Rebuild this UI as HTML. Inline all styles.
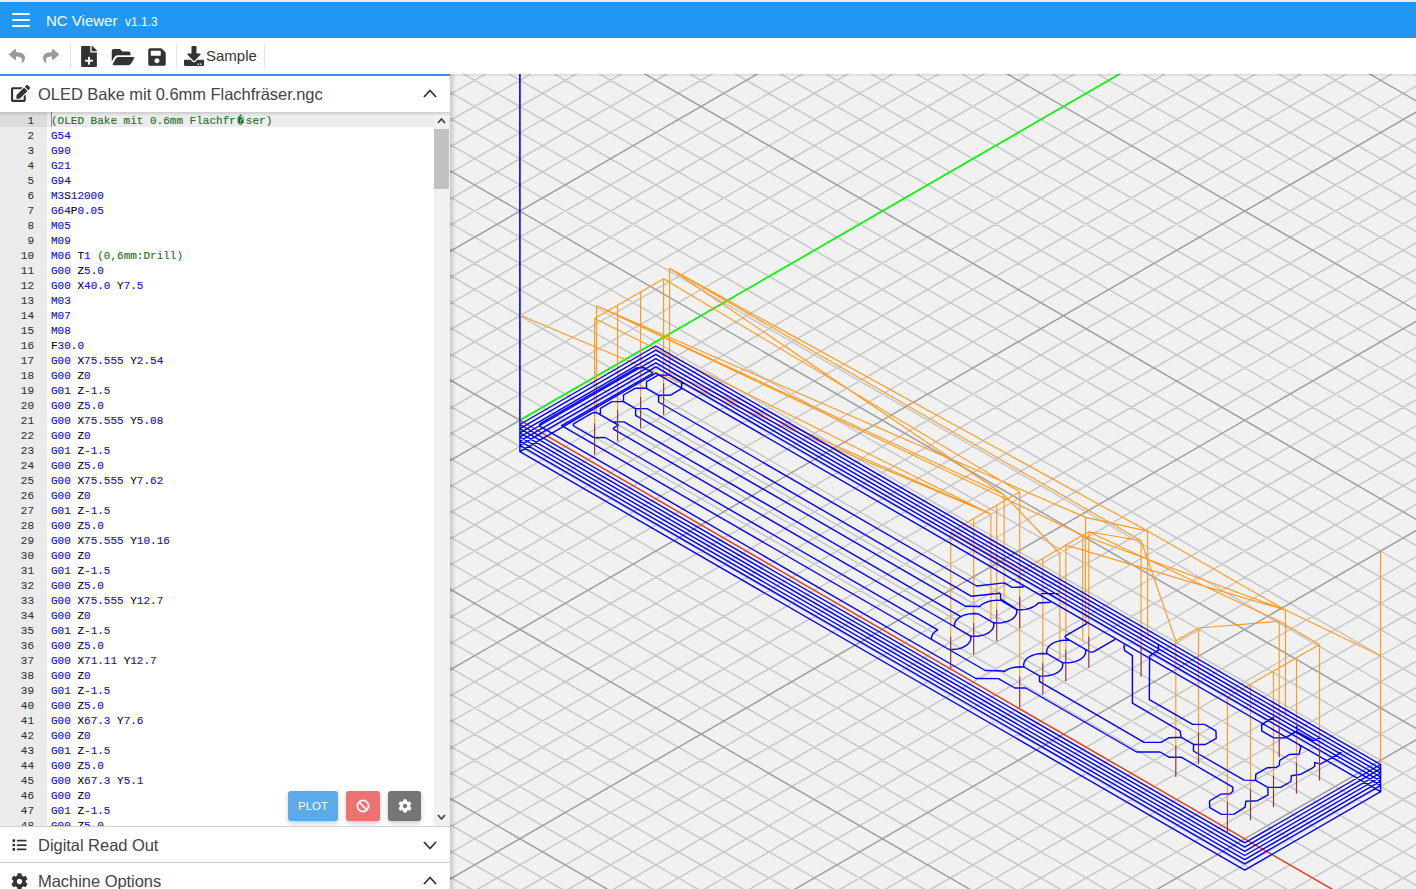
<!DOCTYPE html><html><head><meta charset="utf-8"><title>NC Viewer</title><style>
*{box-sizing:border-box;margin:0;padding:0}
html,body{width:1416px;height:889px;overflow:hidden;background:#fff;font-family:"Liberation Sans",sans-serif;}
#top{position:absolute;left:0;top:0;width:1416px;height:2px;background:#ece9e4}
#hdr{position:absolute;left:0;top:2px;width:1416px;height:36px;background:#2196f3;color:#fff}
#hdr .burger{position:absolute;left:12px;top:11px;width:18px;height:14px}
#hdr .burger i{position:absolute;left:0;width:18px;height:2px;background:#fff;border-radius:1px}
#hdr .title{position:absolute;left:46px;top:9.5px;font-size:15px;line-height:18px;white-space:nowrap}
#hdr .ver{position:absolute;left:125px;top:10.5px;font-size:12px;line-height:18px;white-space:nowrap}
#tb{position:absolute;left:0;top:38px;width:1416px;height:36px;background:#fff}
#tb .sep{position:absolute;top:6px;width:1px;height:25px;background:#e4e4e4}
#tb svg{position:absolute}
#tb .sample{position:absolute;left:206px;top:9px;font-size:15px;line-height:18px;color:#333}
#side{position:absolute;left:0;top:74px;width:450px;height:815px;background:#fff;border-top:2px solid #3f8fda}
.acc{position:absolute;left:0;width:450px;height:36px;background:#fff;color:#444}
.acc .lbl{position:absolute;left:38px;top:8px;font-size:16.5px;letter-spacing:-0.04px;line-height:20px;white-space:nowrap;color:#444}
.acc svg{position:absolute}
#ed{position:absolute;left:0;top:35.5px;width:450px;height:714.5px;background:#fff;overflow:hidden;font-family:"Liberation Mono",monospace;font-size:11px;line-height:15px}
#ed .gut{position:absolute;left:0;top:0;width:47px;height:100%;background:#ebebeb;color:#333;text-align:right;-webkit-text-stroke:0.1px}
#ed .gl{height:15px;padding-right:13px;padding-top:2px}
#ed .gl.act{background:#dcdcdc}
#ed .txt{position:absolute;left:47px;top:0;width:387px;height:100%}
#ed .tl{height:15px;padding-left:4px;white-space:pre;padding-top:2px;-webkit-text-stroke:0.12px}
#ed .rc{display:inline-block;width:10px;text-align:center}
#ed .tl.act{background:#ececec}
#ed .k{color:#1010c4}#ed .n{color:#1010c4}#ed .l{color:#000}#ed .c{color:#236e24}
#ed .cursor{position:absolute;left:51px;top:0;width:1px;height:15px;background:#888}
#ed .sb{position:absolute;left:434px;top:0;width:16px;height:100%;background:#f1f1f1}
#ed .sb .th{position:absolute;left:0;top:17px;width:15px;height:60px;background:#c1c1c1}
#ed .shadow{position:absolute;left:0;top:0;width:450px;height:4px;background:linear-gradient(rgba(0,0,0,.14),rgba(0,0,0,0))}
.btn{font-family:"Liberation Sans",sans-serif;position:absolute;top:679px;height:30px;border-radius:3px;box-shadow:0 2px 5px rgba(0,0,0,.22);color:#fff;font-size:11.5px;text-align:center;line-height:30px}
#cv{position:absolute;left:450px;top:74px;width:966px;height:815px;background:#f1f1f1;overflow:hidden}
#cv svg{position:absolute;left:0;top:0}
#cvsh{position:absolute;left:450px;top:74px;width:6px;height:815px;background:linear-gradient(90deg,rgba(0,0,0,.17),rgba(0,0,0,0))}
#cvtop{position:absolute;left:450px;top:74px;width:966px;height:3px;background:linear-gradient(rgba(0,0,0,.10),rgba(0,0,0,0))}
</style></head><body><div id="cv"><svg width="966" height="815" viewBox="0 0 966 815"><path d="M-4913.1 -961.4L2334.9 3223.2M-4913.1 1654L2334.9 -2530.6M-4890.5 -974.5L2357.6 3210.2M-4890.5 1667.1L2357.6 -2517.6M-4867.8 -987.6L2380.2 3197.1M-4867.8 1680.2L2380.2 -2504.5M-4845.2 -1000.6L2402.9 3184M-4845.2 1693.2L2402.9 -2491.4M-4799.9 -1026.8L2448.2 3157.9M-4799.9 1719.4L2448.2 -2465.3M-4777.2 -1039.9L2470.8 3144.8M-4777.2 1732.5L2470.8 -2452.2M-4754.6 -1052.9L2493.5 3131.7M-4754.6 1745.5L2493.5 -2439.1M-4731.9 -1066L2516.1 3118.6M-4731.9 1758.6L2516.1 -2426M-4709.3 -1079.1L2538.8 3105.5M-4709.3 1771.7L2538.8 -2412.9M-4686.6 -1092.2L2561.4 3092.5M-4686.6 1784.8L2561.4 -2399.9M-4664 -1105.2L2584.1 3079.4M-4664 1797.8L2584.1 -2386.8M-4618.7 -1131.4L2629.4 3053.2M-4618.7 1824L2629.4 -2360.6M-4596 -1144.5L2652 3040.2M-4596 1837.1L2652 -2347.6M-4573.4 -1157.6L2674.7 3027.1M-4573.4 1850.2L2674.7 -2334.5M-4550.7 -1170.6L2697.3 3014M-4550.7 1863.2L2697.3 -2321.4M-4528 -1183.7L2720 3000.9M-4528 1876.3L2720 -2308.3M-4505.4 -1196.8L2742.6 2987.9M-4505.4 1889.4L2742.6 -2295.3M-4482.8 -1209.9L2765.3 2974.8M-4482.8 1902.5L2765.3 -2282.2M-4437.5 -1236L2810.6 2948.6M-4437.5 1928.6L2810.6 -2256M-4414.8 -1249.1L2833.2 2935.5M-4414.8 1941.7L2833.2 -2242.9M-4392.1 -1262.2L2855.9 2922.5M-4392.1 1954.8L2855.9 -2229.9M-4369.5 -1275.2L2878.5 2909.4M-4369.5 1967.8L2878.5 -2216.8M-4346.9 -1288.3L2901.2 2896.3M-4346.9 1980.9L2901.2 -2203.7M-4324.2 -1301.4L2923.8 2883.2M-4324.2 1994L2923.8 -2190.6M-4301.5 -1314.5L2946.5 2870.2M-4301.5 2007.1L2946.5 -2177.6M-4256.2 -1340.6L2991.8 2844M-4256.2 2033.2L2991.8 -2151.4M-4233.6 -1353.7L3014.4 2830.9M-4233.6 2046.3L3014.4 -2138.3M-4211 -1366.8L3037.1 2817.8M-4211 2059.4L3037.1 -2125.2M-4188.3 -1379.9L3059.7 2804.8M-4188.3 2072.5L3059.7 -2112.2M-4165.6 -1392.9L3082.4 2791.7M-4165.6 2085.5L3082.4 -2099.1M-4143 -1406L3105 2778.6M-4143 2098.6L3105 -2086M-4120.4 -1419.1L3127.7 2765.5M-4120.4 2111.7L3127.7 -2072.9M-4075 -1445.2L3173 2739.4M-4075 2137.8L3173 -2046.8M-4052.4 -1458.3L3195.6 2726.3M-4052.4 2150.9L3195.6 -2033.7M-4029.8 -1471.4L3218.3 2713.2M-4029.8 2164L3218.3 -2020.6M-4007.1 -1484.5L3240.9 2700.2M-4007.1 2177.1L3240.9 -2007.6M-3984.5 -1497.6L3263.6 2687.1M-3984.5 2190.2L3263.6 -1994.5M-3961.8 -1510.6L3286.2 2674M-3961.8 2203.2L3286.2 -1981.4M-3939.2 -1523.7L3308.9 2660.9M-3939.2 2216.3L3308.9 -1968.3M-3893.8 -1549.9L3354.2 2634.8M-3893.8 2242.5L3354.2 -1942.2M-3871.2 -1562.9L3376.8 2621.7M-3871.2 2255.5L3376.8 -1929.1M-3848.6 -1576L3399.5 2608.6M-3848.6 2268.6L3399.5 -1916M-3825.9 -1589.1L3422.1 2595.5M-3825.9 2281.7L3422.1 -1902.9M-3803.2 -1602.2L3444.8 2582.5M-3803.2 2294.8L3444.8 -1889.9M-3780.6 -1615.2L3467.4 2569.4M-3780.6 2307.8L3467.4 -1876.8M-3758 -1628.3L3490.1 2556.3M-3758 2320.9L3490.1 -1863.7M-3712.7 -1654.5L3535.4 2530.2M-3712.7 2347.1L3535.4 -1837.6M-3690 -1667.6L3558 2517.1M-3690 2360.2L3558 -1824.5M-3667.3 -1680.6L3580.7 2504M-3667.3 2373.2L3580.7 -1811.4M-3644.7 -1693.7L3603.3 2490.9M-3644.7 2386.3L3603.3 -1798.3M-3622.1 -1706.8L3626 2477.8M-3622.1 2399.4L3626 -1785.2M-3599.4 -1719.9L3648.6 2464.8M-3599.4 2412.5L3648.6 -1772.2M-3576.8 -1732.9L3671.2 2451.7M-3576.8 2425.5L3671.2 -1759.1M-3531.5 -1759.1L3716.6 2425.5M-3531.5 2451.7L3716.6 -1732.9M-3508.8 -1772.2L3739.2 2412.5M-3508.8 2464.8L3739.2 -1719.9M-3486.2 -1785.2L3761.9 2399.4M-3486.2 2477.8L3761.9 -1706.8M-3463.5 -1798.3L3784.5 2386.3M-3463.5 2490.9L3784.5 -1693.7M-3440.8 -1811.4L3807.1 2373.2M-3440.8 2504L3807.1 -1680.6M-3418.2 -1824.5L3829.8 2360.2M-3418.2 2517.1L3829.8 -1667.6M-3395.6 -1837.6L3852.4 2347.1M-3395.6 2530.2L3852.4 -1654.5M-3350.2 -1863.7L3897.8 2320.9M-3350.2 2556.3L3897.8 -1628.3M-3327.6 -1876.8L3920.4 2307.8M-3327.6 2569.4L3920.4 -1615.2M-3305 -1889.9L3943.1 2294.8M-3305 2582.5L3943.1 -1602.2M-3282.3 -1902.9L3965.7 2281.7M-3282.3 2595.5L3965.7 -1589.1M-3259.7 -1916L3988.4 2268.6M-3259.7 2608.6L3988.4 -1576M-3237 -1929.1L4011 2255.5M-3237 2621.7L4011 -1562.9M-3214.3 -1942.2L4033.6 2242.5M-3214.3 2634.8L4033.6 -1549.9M-3169.1 -1968.3L4078.9 2216.3M-3169.1 2660.9L4078.9 -1523.7M-3146.4 -1981.4L4101.6 2203.2M-3146.4 2674L4101.6 -1510.6M-3123.8 -1994.5L4124.2 2190.2M-3123.8 2687.1L4124.2 -1497.6M-3101.1 -2007.6L4146.9 2177.1M-3101.1 2700.2L4146.9 -1484.5M-3078.5 -2020.6L4169.6 2164M-3078.5 2713.2L4169.6 -1471.4M-3055.8 -2033.7L4192.2 2150.9M-3055.8 2726.3L4192.2 -1458.3M-3033.2 -2046.8L4214.8 2137.8M-3033.2 2739.4L4214.8 -1445.2M-2987.8 -2072.9L4260.1 2111.7M-2987.8 2765.5L4260.1 -1419.1M-2965.2 -2086L4282.8 2098.6M-2965.2 2778.6L4282.8 -1406M-2942.6 -2099.1L4305.4 2085.5M-2942.6 2791.7L4305.4 -1392.9M-2919.9 -2112.2L4328.1 2072.5M-2919.9 2804.8L4328.1 -1379.9M-2897.2 -2125.2L4350.8 2059.4M-2897.2 2817.8L4350.8 -1366.8M-2874.6 -2138.3L4373.4 2046.3M-2874.6 2830.9L4373.4 -1353.7M-2852 -2151.4L4396.1 2033.2M-2852 2844L4396.1 -1340.6M-2806.7 -2177.6L4441.3 2007.1M-2806.7 2870.2L4441.3 -1314.5M-2784 -2190.6L4464 1994M-2784 2883.2L4464 -1301.4M-2761.3 -2203.7L4486.6 1980.9M-2761.3 2896.3L4486.6 -1288.3M-2738.7 -2216.8L4509.3 1967.8M-2738.7 2909.4L4509.3 -1275.2M-2716.1 -2229.9L4531.9 1954.8M-2716.1 2922.5L4531.9 -1262.2M-2693.4 -2242.9L4554.6 1941.7M-2693.4 2935.5L4554.6 -1249.1M-2670.8 -2256L4577.2 1928.6M-2670.8 2948.6L4577.2 -1236M-2625.5 -2282.2L4622.6 1902.5M-2625.5 2974.8L4622.6 -1209.9M-2602.8 -2295.3L4645.2 1889.4M-2602.8 2987.9L4645.2 -1196.8M-2580.2 -2308.3L4667.8 1876.3M-2580.2 3000.9L4667.8 -1183.7M-2557.5 -2321.4L4690.5 1863.2M-2557.5 3014L4690.5 -1170.6M-2534.8 -2334.5L4713.1 1850.2M-2534.8 3027.1L4713.1 -1157.6M-2512.2 -2347.6L4735.8 1837.1M-2512.2 3040.2L4735.8 -1144.5M-2489.6 -2360.6L4758.4 1824M-2489.6 3053.2L4758.4 -1131.4M-2444.2 -2386.8L4803.8 1797.8M-2444.2 3079.4L4803.8 -1105.2M-2421.6 -2399.9L4826.4 1784.8M-2421.6 3092.5L4826.4 -1092.2M-2398.9 -2412.9L4849.1 1771.7M-2398.9 3105.5L4849.1 -1079.1M-2376.3 -2426L4871.7 1758.6M-2376.3 3118.6L4871.7 -1066M-2353.7 -2439.1L4894.3 1745.5M-2353.7 3131.7L4894.3 -1052.9M-2331 -2452.2L4917 1732.5M-2331 3144.8L4917 -1039.9M-2308.3 -2465.3L4939.6 1719.4M-2308.3 3157.9L4939.6 -1026.8M-2263.1 -2491.4L4984.9 1693.2M-2263.1 3184L4984.9 -1000.6M-2240.4 -2504.5L5007.6 1680.2M-2240.4 3197.1L5007.6 -987.6M-2217.8 -2517.6L5030.2 1667.1M-2217.8 3210.2L5030.2 -974.5M-2195.1 -2530.6L5052.9 1654M-2195.1 3223.2L5052.9 -961.4M-2172.4 -2543.7L5075.6 1640.9M-2172.4 3236.3L5075.6 -948.3M-2149.8 -2556.8L5098.2 1627.8M-2149.8 3249.4L5098.2 -935.2M-2127.2 -2569.9L5120.9 1614.8M-2127.2 3262.5L5120.9 -922.2M-2081.8 -2596L5166.1 1588.6M-2081.8 3288.6L5166.1 -896M-2059.2 -2609.1L5188.8 1575.5M-2059.2 3301.7L5188.8 -882.9M-2036.6 -2622.2L5211.4 1562.5M-2036.6 3314.8L5211.4 -869.9M-2013.9 -2635.3L5234.1 1549.4M-2013.9 3327.9L5234.1 -856.8M-1991.2 -2648.3L5256.8 1536.3M-1991.2 3340.9L5256.8 -843.7M-1968.6 -2661.4L5279.4 1523.2M-1968.6 3354L5279.4 -830.6M-1946 -2674.5L5302.1 1510.2M-1946 3367.1L5302.1 -817.6M-1900.7 -2700.6L5347.4 1484M-1900.7 3393.2L5347.4 -791.4M-1878 -2713.7L5370 1470.9M-1878 3406.3L5370 -778.3M-1855.3 -2726.8L5392.6 1457.8M-1855.3 3419.4L5392.6 -765.2M-1832.7 -2739.9L5415.3 1444.8M-1832.7 3432.5L5415.3 -752.2M-1810.1 -2752.9L5437.9 1431.7M-1810.1 3445.5L5437.9 -739.1M-1787.4 -2766L5460.6 1418.6M-1787.4 3458.6L5460.6 -726M-1764.8 -2779.1L5483.2 1405.5M-1764.8 3471.7L5483.2 -712.9" stroke="#c7c7c7" stroke-width="1.45" fill="none"/><path d="M-4822.5 -1013.7L2425.5 3170.9M-4822.5 1706.3L2425.5 -2478.3M-4641.3 -1118.3L2606.7 3066.3M-4641.3 1810.9L2606.7 -2373.7M-4460.1 -1222.9L2787.9 2961.7M-4460.1 1915.5L2787.9 -2269.1M-4278.9 -1327.6L2969.1 2857.1M-4278.9 2020.2L2969.1 -2164.5M-4097.7 -1432.2L3150.3 2752.5M-4097.7 2124.8L3150.3 -2059.9M-3916.5 -1536.8L3331.5 2647.8M-3916.5 2229.4L3331.5 -1955.2M-3735.3 -1641.4L3512.7 2543.2M-3735.3 2334L3512.7 -1850.6M-3554.1 -1746L3693.9 2438.6M-3554.1 2438.6L3693.9 -1746M-3372.9 -1850.6L3875.1 2334M-3372.9 2543.2L3875.1 -1641.4M-3191.7 -1955.2L4056.3 2229.4M-3191.7 2647.8L4056.3 -1536.8M-3010.5 -2059.9L4237.5 2124.8M-3010.5 2752.5L4237.5 -1432.2M-2829.3 -2164.5L4418.7 2020.2M-2829.3 2857.1L4418.7 -1327.6M-2648.1 -2269.1L4599.9 1915.5M-2648.1 2961.7L4599.9 -1222.9M-2466.9 -2373.7L4781.1 1810.9M-2466.9 3066.3L4781.1 -1118.3M-2285.7 -2478.3L4962.3 1706.3M-2285.7 3170.9L4962.3 -1013.7M-2104.5 -2582.9L5143.5 1601.7M-2104.5 3275.5L5143.5 -909.1M-1923.3 -2687.6L5324.7 1497.1M-1923.3 3380.2L5324.7 -804.5" stroke="#9d9d9d" stroke-width="1.45" fill="none"/><path d="M69.9 346.3 L1881.9 1392.5" stroke="#ff3000" stroke-width="1.15" fill="none"/><path d="M69.9 346.3 L1881.9 -699.9" stroke="#00ff00" stroke-width="1.6" fill="none"/><path d="M69.9 346.3 L69.9 -1745.7" stroke="#0000ff" stroke-width="1.6" fill="none"/><path d="M144.6 244.6 L144.6 349.2M167.6 231.3 L167.6 335.9M190.6 218.1 L190.6 322.7M213.6 204.8 L213.6 309.4M500.7 457.8 L500.7 562.4M523.7 444.5 L523.7 549.1M546.7 431.2 L546.7 535.8M569.7 417.9 L569.7 522.5M569.7 497.6 L569.7 602.2M592.8 484.4 L592.8 589M615.8 471.1 L615.8 575.7M638.8 457.8 L638.8 562.4M725.8 567.1 L725.8 671.7M748.5 554 L748.5 658.6M829.2 547.2 L829.2 651.8M777.4 623.6 L777.4 728.2M800.5 610.3 L800.5 714.9M823.5 597.1 L823.5 701.7M846.5 583.8 L846.5 688.4M869.5 570.5 L869.5 675.1M691.1 466.8 L691.1 571.4M144.6 244.6 L167.6 231.3 L190.6 218.1 L213.6 204.8M500.7 457.8 L523.7 444.5 L546.7 431.2 L569.7 417.9M569.7 497.6 L592.8 484.4 L615.8 471.1 L638.8 457.8M777.4 623.6 L800.5 610.3 L823.5 597.1 L846.5 583.8 L869.5 570.5M725.8 567.1 L748.5 554 L829.2 547.2 L869.5 570.5M500.7 457.8 L569.7 497.6M146.5 231.8 L146.5 337.8M219.6 194.2 L219.6 300.2M540.9 440.1 L540.9 546.1M554.1 420.8 L554.1 526.8M609.8 479.5 L609.8 585.5M632.7 461.2 L632.7 567.2M635.5 443.4 L635.5 549.4M697.6 457.1 L697.6 563.1M835.5 536.1 L835.5 642.1M70.2 241.2 L540.9 440.1M144.6 244.6 L540.9 440.1M213.6 204.8 L569.7 417.9M146.5 231.8 L554.1 420.8M146.5 231.8 L635.5 443.4M219.6 194.2 L554.1 420.8M219.6 194.2 L691.1 466.7M219.6 194.2 L697.6 457.1M635.5 443.4 L697.6 457.1M638.8 457.8 L691.1 466.7M697.6 457.1 L835.5 536.1M632.7 461.2 L835.5 536.1M615.8 471.1 L835.5 536.1M691.1 466.7 L725.8 567.1M554.1 420.8 L609.8 479.5M540.9 440.1 L219.6 298.8M146.5 231.8 L632.7 461.2M638.8 457.8 L829.2 547.2M835.5 536.1 L930.6 581.7M930.6 477.1 L930.6 690.5" stroke="#ff9a1e" stroke-width="1.15" fill="none" stroke-linejoin="round"/><path d="M69.9 350.5 L205.8 272 L930.6 690.5 L794.7 768.9ZM69.9 354.7 L205.8 276.2 L930.6 694.7 L794.7 773.1ZM69.9 358.9 L205.8 280.4 L930.6 698.9 L794.7 777.3ZM69.9 363 L205.8 284.6 L930.6 703 L794.7 781.5ZM69.9 367.2 L205.8 288.8 L930.6 707.2 L794.7 785.7ZM69.9 371.4 L205.8 292.9 L930.6 711.4 L794.7 789.9ZM69.9 377.7 L205.8 299.2 L930.6 717.7 L794.7 796.1ZM69.9 346.3 L69.9 377.7M930.6 690.5 L930.6 717.7M520.6 562.1 L520.9 564.8 L520.1 567.4 L518.3 569.8 L515.6 572 L512.1 573.7 L508.1 574.9 L503.6 575.5 L499 575.5 L481.5 565.4 L481.6 562.8 L482.7 560.2 L484.7 557.9 L487.7 555.9 L155.1 363.5 L143.9 363.7 L124.4 352.5 L123.6 351.8 L123.3 350.9 L123.6 350.1 L124.4 349.3 L142 339.2 L143.3 338.7 L144.7 338.5 L146.2 338.7 L147.5 339.2 L168.3 351.2 L163.9 353.8 L163.9 353.8 L163.4 354.3 L163.4 354.8 L163.9 355.3 L520.7 562M510.8 542.6 L174 347.9 L162.6 347.9 L150.4 340.9 L150.4 334.3 L162 327.6 L173.5 327.6 L185.6 334.6 L185.6 341.3 L515.7 532.3 L529 532.5 L529.5 532.6 L531.8 530.5 L534.8 528.8 L538.3 527.5 L542.3 526.6 L546.6 526.3 L550.8 526.4 L566.6 535.6 L566.6 535.5 L566.9 538 L566.3 540.4 L564.8 542.7 L562.6 544.8 L559.6 546.5 L556 547.8 L552 548.7 L547.8 549 L543.6 548.8 L527.8 539.7M520.5 562.1 L524.8 562.3 L529 562 L533 561.1 L536.5 559.8 L539.5 558.1 L541.8 556 L543.3 553.7 L543.9 551.3 L543.6 548.8M527.8 539.7 L523.6 539.5 L519.4 539.9 L515.4 540.7 L511.8 542.1 L508.8 543.8 L506.5 545.9 L505 548.2 L504.4 550.6 L504.8 553M504.8 553 L520.5 562.1M600.8 528.3 L588.2 529 L586 531.2 L583 533 L579.3 534.5 L575.3 535.4 L570.9 535.7 L566.6 535.6 L566.8 535.4 L550.5 524.8 L550.6 520.2 L549.4 519.3 L521.5 522.3 L197.1 334.6 L185.6 334.6 L173.5 327.6 L173.5 321 L185.1 314.3 L196.5 314.3 L208.6 321.3 L208.6 328 L526.6 512 L554.4 508.9 L562 513.4 L571.3 513 L573.8 513M220.1 321.3 L208.6 321.3 L196.5 314.3 L196.5 307.7 L208.1 301.1 L219.5 301.1 L231.6 308.1 L231.6 314.7ZM203 299 L193.8 293.6 L187.1 293.7 L90.9 349.2 L89.9 350.1 L89.6 351.1 L89.9 352.1 L90.9 352.9 L525.8 604.5 L548.4 604.6 L564.8 614 L575.7 614 L686.6 678 L710 678 L719 683.2 L731.6 683.3 L782.8 713.2 L782.9 717.2 L779.9 719.7 L770.9 720.1 L759.5 727 L759.8 733.6 L771.5 740.4 L784.2 740.1 L795.1 733.2 L795.9 727.2 L807.6 726.7 L818.1 720.8 L817.8 713.4 L805.5 706.4 L794.1 706.1 L743.4 677 L743.6 670.4 L731.3 663.3 L719.2 663.7 L711 668.4 L694.1 668.4 L589.6 607.7 L589.4 601.9 L574 593 L574 593 L569.5 592.8 L565 593.2 L560.8 594.1 L557.1 595.6 L554.1 597.6 L553.2 597 L535.3 596.5 L111.6 351.7 L203 299M589.5 601.9 L593.7 602.1 L597.9 601.8 L601.9 600.9 L605.5 599.6 L608.5 597.9 L610.8 595.8 L612.2 593.5 L612.8 591.1 L612.4 588.6M596.9 579.7 L592.7 579.5 L588.5 579.8 L584.5 580.6 L580.9 582 L577.9 583.7 L575.6 585.8 L574.2 588.1 L573.6 590.5 L574 592.9M612.5 588.6 L616.7 588.8 L620.9 588.5 L624.9 587.6 L628.5 586.3 L631.5 584.6 L633.8 582.5 L635.2 580.2 L635.8 577.8 L635.5 575.3M620 566.4 L615.7 566.2 L611.5 566.5 L607.5 567.4 L603.9 568.7 L600.9 570.4 L598.6 572.5 L597.2 574.8 L596.6 577.2 L597 579.7M597 579.7 L612.4 588.6M637.1 549.3 L615.9 561.6 L616 561.5 L615.2 562.3 L615.2 563.3 L616 564.1 L639.4 577.6 L639.4 577.6 L640.8 578.1 L642.5 578.1 L643.9 577.6 L665.1 565.4M674 570.6 L674.5 576.4 L682.4 581.7 L682.4 629.2 L730 656.8 L731.3 663.3M708.2 571.1 L708.7 575.8 L699.6 582.2 L699.3 625.6 L742.7 650.4 L754.5 650.4 L765.9 656.9 L766.2 664.3 L755.4 670.5 L743.6 670.4M805.5 706.4 L805.9 700.1 L817.1 693.8 L826.5 693.3 L829.2 691.2 L829.8 686.4 L839.3 680.5 L849.3 680 L849.9 676.3 L850.9 673.1 L849.3 671M818.1 713.4 L830.8 713.4 L840.9 707.5 L841.4 701.7 L851 700.2 L862.6 693.8 L864.7 692.2 L864.7 688.4 L870.1 690.1 L876.3 686.9 L891.5 678.4M846.9 651.9 L846.8 657.5 L863.5 666.7 L869.7 663.9M590.5 519.6 L608.6 519.6M823.9 643.3 L811.7 650.3 L811.7 656.9 L823.9 663.9 L835.3 663.9 L846.6 657.4" stroke="#0000ff" stroke-width="1.42" fill="none" stroke-linejoin="round"/><path d="M144.6 349.2 L144.6 380.6M167.6 335.9 L167.6 367.3M190.6 322.7 L190.6 354M213.6 309.4 L213.6 340.8M500.7 562.4 L500.7 593.8M523.7 549.1 L523.7 580.5M546.7 535.8 L546.7 567.2M569.7 522.5 L569.7 553.9M569.7 602.2 L569.7 633.6M592.8 589 L592.8 620.3M615.8 575.7 L615.8 607.1M638.8 562.4 L638.8 593.8M725.8 671.7 L725.8 703M748.5 658.6 L748.5 690M829.2 651.8 L829.2 683.2M777.4 728.2 L777.4 759.6M800.5 714.9 L800.5 746.3M823.5 701.7 L823.5 733M846.5 688.4 L846.5 719.7M869.5 675.1 L869.5 706.5M691.1 571.4 L691.1 602.8" stroke="#8b3a3a" stroke-width="1.2" fill="none"/></svg></div><div id="cvsh"></div><div id="cvtop"></div><div id="top"></div><div id="hdr"><div class="burger"><i style="top:0"></i><i style="top:6px"></i><i style="top:12px"></i></div><div class="title">NC Viewer</div><div class="ver">v1.1.3</div></div><div id="tb"><div class="sep" style="left:70px"></div><div class="sep" style="left:176px"></div><div class="sep" style="left:264px"></div><svg style="left:9px;top:10px" width="16" height="16" viewBox="0 0 512 512"><path fill="#999" d="M8.3 189.2l176-152C199.7 23.9 224 34.7 224 55.4v80.1c160.600 1.800 288 34 288 186.300 0 61.400-39.600 122.300-83.300 154.100-13.700 9.900-33.100-2.500-28.100-18.600 45.300-145-21.500-183.500-176.600-185.700v87.900c0 20.700-24.300 31.500-39.700 18.200l-176-152c-11-9.600-11-26.700 0-36.300z"/></svg><svg style="left:43px;top:10px" width="16" height="16" viewBox="0 0 512 512"><path fill="#999" d="M503.700 189.200l-176-152C312.300 23.900 288 34.700 288 55.400v80.100C127.400 137.300 0 169.500 0 321.800c0 61.400 39.600 122.300 83.300 154.100 13.700 9.900 33.100-2.500 28.100-18.600C66.100 312.300 132.900 273.800 288 271.600v87.900c0 20.700 24.300 31.500 39.700 18.200l176-152c11-9.600 11-26.700 0-36.300z"/></svg><svg style="left:81px;top:8px" width="16" height="21" viewBox="0 0 384 512"><path fill="#333" d="M224 136V0H24C10.700 0 0 10.700 0 24v464c0 13.300 10.700 24 24 24h336c13.300 0 24-10.700 24-24V160H248c-13.200 0-24-10.800-24-24zm64 212v24c0 6.600-5.400 12-12 12h-60v60c0 6.600-5.400 12-12 12h-24c-6.600 0-12-5.400-12-12v-60h-60c-6.600 0-12-5.400-12-12v-24c0-6.600 5.400-12 12-12h60v-60c0-6.600 5.400-12 12-12h24c6.600 0 12 5.400 12 12v60h60c6.600 0 12 5.400 12 12zM384 121.900v6.100H256V0h6.100c6.400 0 12.500 2.500 17 7l97.900 98c4.500 4.500 7 10.600 7 16.900z"/></svg><svg style="left:111px;top:9px" width="24" height="20" viewBox="0 0 576 512"><path fill="#333" d="M572.700 292.100l-72.400 124.200C483.100 445.800 451.500 464 417.300 464H48c-18.500 0-30-20.100-20.700-36l72.400-124.200C116.900 274.200 148.500 256 182.600 256H552c18.500 0 30.100 20.100 20.700 36.100zM152.600 208H480v-48c0-26.500-21.500-48-48-48H272l-64-64H48C21.500 48 0 69.500 0 96v278l69.100-118.400C86.200 226.200 118.400 208 152.600 208z"/></svg><svg style="left:148px;top:9px" width="18" height="20" viewBox="0 0 448 512"><path fill="#333" d="M433.900 129.900l-83.900-83.900A48 48 0 0 0 316.100 32H48C21.500 32 0 53.500 0 80v352c0 26.500 21.500 48 48 48h352c26.500 0 48-21.500 48-48V163.900a48 48 0 0 0-14.100-33.900zM224 416c-35.300 0-64-28.700-64-64s28.700-64 64-64 64 28.700 64 64-28.700 64-64 64zm96-304.500V212c0 6.600-5.400 12-12 12H76c-6.600 0-12-5.400-12-12V108c0-6.600 5.400-12 12-12h228.500c3.200 0 6.200 1.300 8.500 3.500l3.500 3.500A12 12 0 0 1 320 111.500z"/></svg><svg style="left:184px;top:8px" width="20" height="20" viewBox="0 0 512 512"><path fill="#333" d="M216 0h80c13.300 0 24 10.700 24 24v168h87.700c17.800 0 26.700 21.500 14.100 34.100L269.700 378.300c-7.500 7.500-19.800 7.500-27.300 0L90.100 226.100c-12.600-12.600-3.700-34.100 14.100-34.100H192V24c0-13.300 10.700-24 24-24zm296 376v112c0 13.300-10.700 24-24 24H24c-13.300 0-24-10.700-24-24V376c0-13.300 10.700-24 24-24h146.700l49 49c20.100 20.100 52.500 20.100 72.600 0l49-49H488c13.300 0 24 10.700 24 24zm-124 88c0-11-9-20-20-20s-20 9-20 20 9 20 20 20 20-9 20-20zm64 0c0-11-9-20-20-20s-20 9-20 20 9 20 20 20 20-9 20-20z"/></svg><div class="sample">Sample</div></div><div id="side"><div class="acc" style="top:0;height:35.5px"><svg style="left:11px;top:9px" width="19" height="17" viewBox="0 0 576 512"><path fill="#333" d="M402.600 83.200l90.200 90.200c3.800 3.800 3.800 10 0 13.800L274.400 405.600l-92.800 10.300c-12.400 1.400-22.900-9.100-21.500-21.500l10.300-92.800L388.800 83.200c3.800-3.800 10-3.800 13.800 0zm162-22.900l-48.800-48.800c-15.200-15.200-39.900-15.200-55.200 0l-35.400 35.400c-3.800 3.800-3.800 10 0 13.800l90.200 90.200c3.800 3.800 10 3.800 13.800 0l35.400-35.400c15.200-15.300 15.200-40 0-55.200zM384 346.200V448H64V128h229.800c3.200 0 6.200-1.300 8.500-3.500l40-40c7.600-7.600 2.200-20.500-8.500-20.500H48C21.500 64 0 85.500 0 112v352c0 26.500 21.500 48 48 48h352c26.500 0 48-21.500 48-48V306.200c0-10.700-12.900-16-20.500-8.500l-40 40c-2.200 2.300-3.500 5.300-3.500 8.500z"/></svg><div class="lbl" id="l1">OLED Bake mit 0.6mm Flachfr&auml;ser.ngc</div><svg style="left:423px;top:13px" width="14" height="9" viewBox="0 0 14 9"><path d="M1 8L7 1.500L13 8" fill="none" stroke="#333" stroke-width="1.800"/></svg></div><div id="ed"><div class="gut"><div class="gl act">1</div><div class="gl">2</div><div class="gl">3</div><div class="gl">4</div><div class="gl">5</div><div class="gl">6</div><div class="gl">7</div><div class="gl">8</div><div class="gl">9</div><div class="gl">10</div><div class="gl">11</div><div class="gl">12</div><div class="gl">13</div><div class="gl">14</div><div class="gl">15</div><div class="gl">16</div><div class="gl">17</div><div class="gl">18</div><div class="gl">19</div><div class="gl">20</div><div class="gl">21</div><div class="gl">22</div><div class="gl">23</div><div class="gl">24</div><div class="gl">25</div><div class="gl">26</div><div class="gl">27</div><div class="gl">28</div><div class="gl">29</div><div class="gl">30</div><div class="gl">31</div><div class="gl">32</div><div class="gl">33</div><div class="gl">34</div><div class="gl">35</div><div class="gl">36</div><div class="gl">37</div><div class="gl">38</div><div class="gl">39</div><div class="gl">40</div><div class="gl">41</div><div class="gl">42</div><div class="gl">43</div><div class="gl">44</div><div class="gl">45</div><div class="gl">46</div><div class="gl">47</div><div class="gl">48</div></div><div class="txt"><div class="tl act"><span class="c">(OLED Bake mit 0.6mm Flachfr<span class="rc">�</span>ser)</span></div><div class="tl"><span class="k">G54</span></div><div class="tl"><span class="k">G90</span></div><div class="tl"><span class="k">G21</span></div><div class="tl"><span class="k">G94</span></div><div class="tl"><span class="k">M3</span><span class="l">S</span><span class="n">12000</span></div><div class="tl"><span class="k">G64</span><span class="l">P</span><span class="n">0.05</span></div><div class="tl"><span class="k">M05</span></div><div class="tl"><span class="k">M09</span></div><div class="tl"><span class="k">M06</span> <span class="l">T</span><span class="n">1</span> <span class="c">(0,6mm:Drill)</span></div><div class="tl"><span class="k">G00</span> <span class="l">Z</span><span class="n">5.0</span></div><div class="tl"><span class="k">G00</span> <span class="l">X</span><span class="n">40.0</span> <span class="l">Y</span><span class="n">7.5</span></div><div class="tl"><span class="k">M03</span></div><div class="tl"><span class="k">M07</span></div><div class="tl"><span class="k">M08</span></div><div class="tl"><span class="l">F</span><span class="n">30.0</span></div><div class="tl"><span class="k">G00</span> <span class="l">X</span><span class="n">75.555</span> <span class="l">Y</span><span class="n">2.54</span></div><div class="tl"><span class="k">G00</span> <span class="l">Z</span><span class="n">0</span></div><div class="tl"><span class="k">G01</span> <span class="l">Z</span><span class="n">-1.5</span></div><div class="tl"><span class="k">G00</span> <span class="l">Z</span><span class="n">5.0</span></div><div class="tl"><span class="k">G00</span> <span class="l">X</span><span class="n">75.555</span> <span class="l">Y</span><span class="n">5.08</span></div><div class="tl"><span class="k">G00</span> <span class="l">Z</span><span class="n">0</span></div><div class="tl"><span class="k">G01</span> <span class="l">Z</span><span class="n">-1.5</span></div><div class="tl"><span class="k">G00</span> <span class="l">Z</span><span class="n">5.0</span></div><div class="tl"><span class="k">G00</span> <span class="l">X</span><span class="n">75.555</span> <span class="l">Y</span><span class="n">7.62</span></div><div class="tl"><span class="k">G00</span> <span class="l">Z</span><span class="n">0</span></div><div class="tl"><span class="k">G01</span> <span class="l">Z</span><span class="n">-1.5</span></div><div class="tl"><span class="k">G00</span> <span class="l">Z</span><span class="n">5.0</span></div><div class="tl"><span class="k">G00</span> <span class="l">X</span><span class="n">75.555</span> <span class="l">Y</span><span class="n">10.16</span></div><div class="tl"><span class="k">G00</span> <span class="l">Z</span><span class="n">0</span></div><div class="tl"><span class="k">G01</span> <span class="l">Z</span><span class="n">-1.5</span></div><div class="tl"><span class="k">G00</span> <span class="l">Z</span><span class="n">5.0</span></div><div class="tl"><span class="k">G00</span> <span class="l">X</span><span class="n">75.555</span> <span class="l">Y</span><span class="n">12.7</span></div><div class="tl"><span class="k">G00</span> <span class="l">Z</span><span class="n">0</span></div><div class="tl"><span class="k">G01</span> <span class="l">Z</span><span class="n">-1.5</span></div><div class="tl"><span class="k">G00</span> <span class="l">Z</span><span class="n">5.0</span></div><div class="tl"><span class="k">G00</span> <span class="l">X</span><span class="n">71.11</span> <span class="l">Y</span><span class="n">12.7</span></div><div class="tl"><span class="k">G00</span> <span class="l">Z</span><span class="n">0</span></div><div class="tl"><span class="k">G01</span> <span class="l">Z</span><span class="n">-1.5</span></div><div class="tl"><span class="k">G00</span> <span class="l">Z</span><span class="n">5.0</span></div><div class="tl"><span class="k">G00</span> <span class="l">X</span><span class="n">67.3</span> <span class="l">Y</span><span class="n">7.6</span></div><div class="tl"><span class="k">G00</span> <span class="l">Z</span><span class="n">0</span></div><div class="tl"><span class="k">G01</span> <span class="l">Z</span><span class="n">-1.5</span></div><div class="tl"><span class="k">G00</span> <span class="l">Z</span><span class="n">5.0</span></div><div class="tl"><span class="k">G00</span> <span class="l">X</span><span class="n">67.3</span> <span class="l">Y</span><span class="n">5.1</span></div><div class="tl"><span class="k">G00</span> <span class="l">Z</span><span class="n">0</span></div><div class="tl"><span class="k">G01</span> <span class="l">Z</span><span class="n">-1.5</span></div><div class="tl"><span class="k">G00</span> <span class="l">Z</span><span class="n">5.0</span></div></div><div class="cursor"></div><div class="sb"><div class="th"></div><svg style="position:absolute;left:3px;top:5px" width="9" height="7" viewBox="0 0 9 7"><path d="M1 6L4.500 2L8 6" fill="none" stroke="#444" stroke-width="1.800"/></svg><svg style="position:absolute;left:3px;top:702px" width="9" height="7" viewBox="0 0 9 7"><path d="M1 1L4.500 5L8 1" fill="none" stroke="#444" stroke-width="1.800"/></svg></div><div class="shadow"></div><div class="btn" style="left:288px;width:50px;background:#5aaaec">PLOT</div><div class="btn" style="left:346px;width:34px;background:#ec7272"><svg style="position:absolute;left:10px;top:8px" width="14" height="14" viewBox="0 0 14 14"><circle cx="7" cy="7" r="5.600" fill="none" stroke="#fff" stroke-width="1.700"/><path d="M3 3L11 11" stroke="#fff" stroke-width="1.700"/></svg></div><div class="btn" style="left:388px;width:33px;background:#757575"><svg style="position:absolute;left:10px;top:8px" width="14" height="14" viewBox="0 0 512 512"><path fill="#fff" d="M487.400 315.700l-42.600-24.600c4.300-23.200 4.300-47 0-70.200l42.600-24.600c4.900-2.800 7.100-8.600 5.500-14-11.100-35.600-30-67.800-54.700-94.600-3.800-4.100-10-5.100-14.800-2.300L380.800 110c-17.900-15.400-38.500-27.300-60.800-35.100V25.800c0-5.600-3.900-10.500-9.400-11.700-36.700-8.200-74.300-7.800-109.200 0-5.500 1.200-9.400 6.100-9.400 11.700V75c-22.200 7.900-42.800 19.800-60.800 35.100L88.700 85.500c-4.900-2.800-11-1.900-14.800 2.300-24.700 26.700-43.600 58.900-54.700 94.600-1.700 5.400.600 11.200 5.500 14L67.300 221c-4.300 23.200-4.300 47 0 70.200l-42.600 24.600c-4.900 2.800-7.100 8.600-5.500 14 11.100 35.600 30 67.800 54.700 94.600 3.800 4.100 10 5.100 14.800 2.300l42.600-24.600c17.900 15.400 38.500 27.300 60.800 35.100v49.200c0 5.600 3.900 10.500 9.400 11.700 36.700 8.200 74.300 7.800 109.200 0 5.500-1.200 9.400-6.100 9.400-11.700v-49.200c22.200-7.900 42.800-19.800 60.800-35.100l42.600 24.600c4.900 2.800 11 1.900 14.800-2.300 24.700-26.700 43.600-58.900 54.700-94.600 1.500-5.500-.700-11.300-5.600-14.100zM256 336c-44.100 0-80-35.900-80-80s35.900-80 80-80 80 35.900 80 80-35.900 80-80 80z"/></svg></div></div><div class="acc" style="top:750px;height:37px;border-top:1px solid #d0d0d0"><svg style="left:11px;top:11px" width="17" height="14" viewBox="0 0 512 512"><path fill="#333" d="M80 368H16a16 16 0 0 0-16 16v64a16 16 0 0 0 16 16h64a16 16 0 0 0 16-16v-64a16 16 0 0 0-16-16zm0-320H16A16 16 0 0 0 0 64v64a16 16 0 0 0 16 16h64a16 16 0 0 0 16-16V64a16 16 0 0 0-16-16zm0 160H16a16 16 0 0 0-16 16v64a16 16 0 0 0 16 16h64a16 16 0 0 0 16-16v-64a16 16 0 0 0-16-16zm416 176H176a16 16 0 0 0-16 16v32a16 16 0 0 0 16 16h320a16 16 0 0 0 16-16v-32a16 16 0 0 0-16-16zm0-320H176a16 16 0 0 0-16 16v32a16 16 0 0 0 16 16h320a16 16 0 0 0 16-16V80a16 16 0 0 0-16-16zm0 160H176a16 16 0 0 0-16 16v32a16 16 0 0 0 16 16h320a16 16 0 0 0 16-16v-32a16 16 0 0 0-16-16z"/></svg><div class="lbl" id="l2">Digital Read Out</div><svg style="left:423px;top:14px" width="14" height="9" viewBox="0 0 14 9"><path d="M1 1L7 7.500L13 1" fill="none" stroke="#333" stroke-width="1.800"/></svg></div><div class="acc" style="top:786px;height:30px;border-top:1px solid #d0d0d0"><svg style="left:11px;top:10px" width="17" height="17" viewBox="0 0 512 512"><path fill="#333" d="M487.400 315.700l-42.600-24.600c4.300-23.200 4.300-47 0-70.200l42.600-24.600c4.900-2.800 7.100-8.600 5.500-14-11.100-35.600-30-67.800-54.700-94.600-3.800-4.100-10-5.100-14.800-2.300L380.800 110c-17.900-15.400-38.500-27.300-60.800-35.100V25.800c0-5.600-3.900-10.500-9.400-11.700-36.700-8.200-74.300-7.800-109.200 0-5.500 1.200-9.400 6.100-9.400 11.700V75c-22.200 7.900-42.800 19.800-60.800 35.100L88.700 85.500c-4.900-2.800-11-1.900-14.800 2.300-24.700 26.700-43.600 58.900-54.700 94.600-1.700 5.400.600 11.200 5.500 14L67.300 221c-4.300 23.200-4.300 47 0 70.200l-42.600 24.600c-4.900 2.800-7.100 8.600-5.500 14 11.100 35.600 30 67.800 54.700 94.600 3.800 4.100 10 5.100 14.800 2.300l42.600-24.600c17.900 15.400 38.500 27.300 60.800 35.100v49.200c0 5.600 3.900 10.500 9.400 11.700 36.700 8.200 74.300 7.800 109.200 0 5.500-1.200 9.400-6.100 9.400-11.700v-49.200c22.200-7.900 42.800-19.800 60.800-35.100l42.600 24.600c4.900 2.800 11 1.900 14.800-2.300 24.700-26.700 43.600-58.900 54.700-94.600 1.500-5.500-.700-11.300-5.600-14.100zM256 336c-44.100 0-80-35.900-80-80s35.900-80 80-80 80 35.900 80 80-35.900 80-80 80z"/></svg><div class="lbl" id="l3">Machine Options</div><svg style="left:423px;top:13px" width="14" height="9" viewBox="0 0 14 9"><path d="M1 8L7 1.500L13 8" fill="none" stroke="#333" stroke-width="1.800"/></svg></div></div></body></html>
